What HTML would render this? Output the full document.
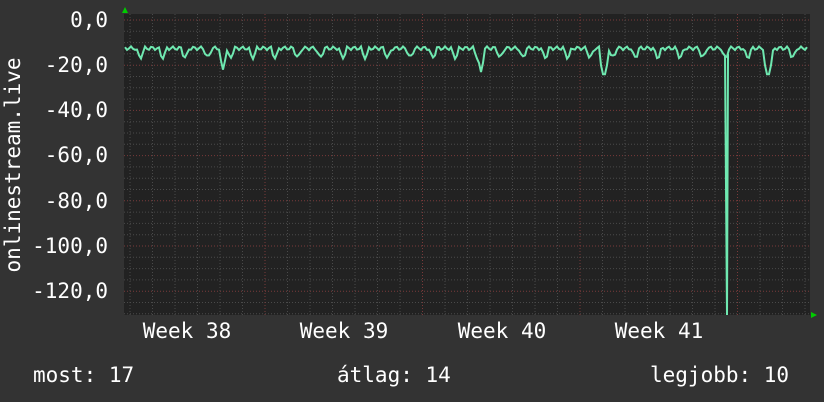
<!DOCTYPE html><html><head><style>
body{margin:0;width:824px;height:402px;background:#333;overflow:hidden;font-family:"DejaVu Sans Mono","Liberation Mono",monospace;color:#fff}
svg{position:absolute;left:0;top:0}
text{font-family:"DejaVu Sans Mono","Liberation Mono",monospace;fill:#fff;font-size:21px}
</style></head><body>
<svg width="824" height="402" id="s">
<rect x="124" y="14" width="686" height="301" fill="#222"/>
<g id="grid"></g>
<path id="d" fill="none" stroke="#6fe8b0" stroke-width="2"/>
<polygon points="122,13 128,13 125,7" fill="#0c0"/>
<polygon points="811,312 811,318 817,315" fill="#0c0"/>
<g text-anchor="end">
<text x="108" y="27">0,0</text><text x="108" y="72">-20,0</text><text x="108" y="117">-40,0</text>
<text x="108" y="162">-60,0</text><text x="108" y="208">-80,0</text><text x="108" y="253">-100,0</text><text x="108" y="298">-120,0</text>
</g>
<text transform="translate(20,165) rotate(-90)" text-anchor="middle">onlinestream.live</text>
<g text-anchor="middle"><text x="187" y="338">Week 38</text><text x="344" y="338">Week 39</text><text x="502" y="338">Week 40</text><text x="659" y="338">Week 41</text></g>
<text x="33" y="382">most: 17</text><text x="337" y="382">átlag: 14</text><text x="650" y="382">legjobb: 10</text>
</svg>
<script>
var g='';
for(var v=0;v>=-130;v-=5){var y=20-v*2.26;if(y>315)break;var maj=v%20==0;
g+='<line x1="124" x2="810" y1="'+y+'" y2="'+y+'" stroke="'+(maj?'#7a3a3a':'#4a4a4a')+'" stroke-dasharray="1,2"/>';}
for(var x=130;x<810;x+=22.5){var maj=Math.abs(((x-107)/157.5)%1)<0.05;
g+='<line y1="14" y2="315" x1="'+x+'" x2="'+x+'" stroke="'+(maj?'#7a3a3a':'#4a4a4a')+'" stroke-dasharray="1,2"/>';}
document.getElementById('grid').innerHTML=g;
var p='',dips={223:-22,481:-23,604:-26,768:-26};
for(var x=125;x<=808;x+=2){var ph=((x-125)%22.5)/22.5;
var v=-12.5-Math.sin(x*0.9)*0.8-(ph>0.5&&ph<0.85?4*Math.sin((ph-0.5)/0.35*Math.PI):0);
for(var k in dips){if(Math.abs(x-k)<4)v=dips[k]+Math.abs(x-k)*2;}
var y=20-v*2.26;p+=(p?'L':'M')+x+','+y.toFixed(1);
if(x==725){p+='L727,315L728,'+y.toFixed(1);}}
document.getElementById('d').setAttribute('d',p);
</script>
</body></html>
